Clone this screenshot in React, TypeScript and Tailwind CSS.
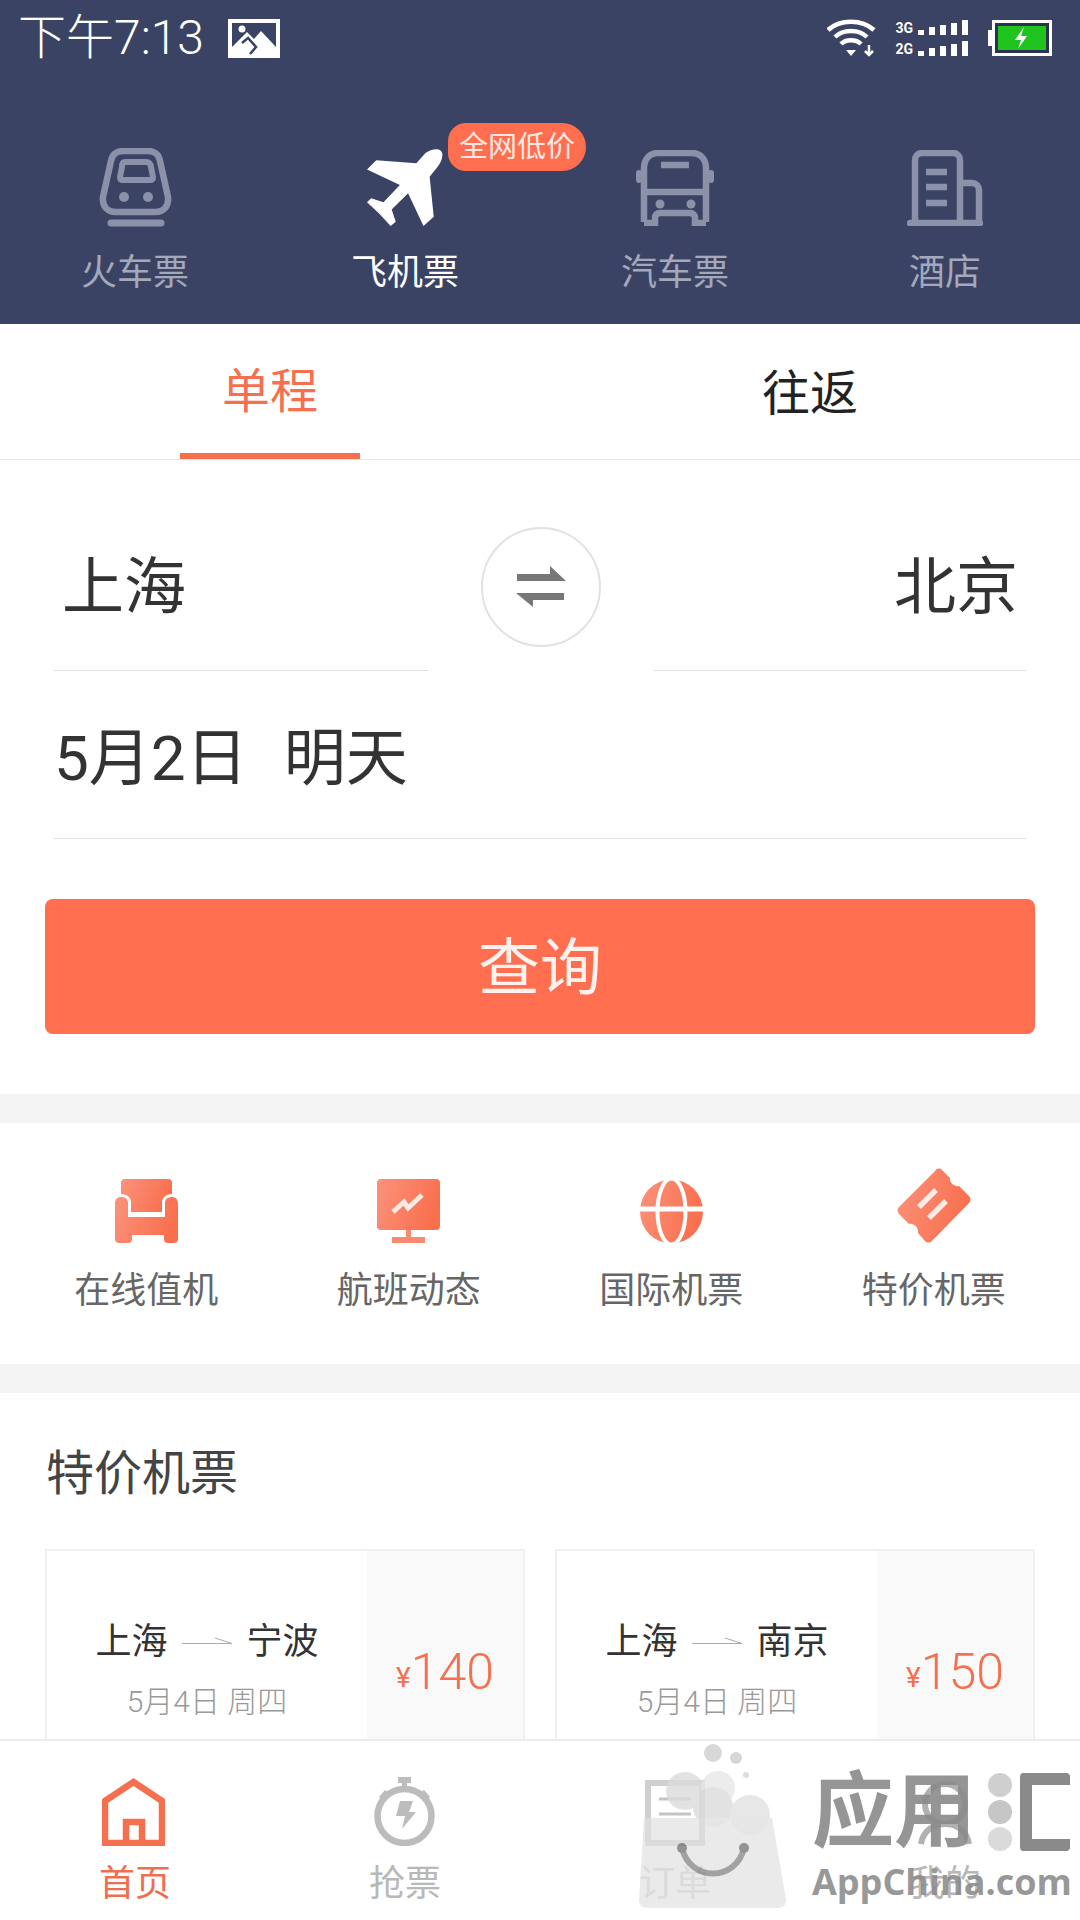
import type { ReactNode } from 'react';

const deals = [
  { to: '宁波', price: '140' },
  { to: '南京', price: '150' },
];

function TrainIcon() {
  return (
    <svg width="73" height="79" viewBox="0 0 73 79" fill="none" stroke="#8b91a8">
      <path strokeWidth="6.5" d="M24 3h25c7 0 11 4 12 10l8 36c1 9-4 15-13 15H17C8 64 3 58 4 49l8-36C13 7 17 3 24 3z" />
      <path strokeWidth="6" d="M26 14h21c3 0 5 2 5 5l2 10c0 2-1 3-3 3H24c-2 0-3-1-3-3l2-10c0-3 1-5 3-5z" />
      <circle cx="25" cy="49" r="5" fill="#8b91a8" stroke="none" />
      <circle cx="49" cy="49" r="5" fill="#8b91a8" stroke="none" />
      <path strokeWidth="7" strokeLinecap="round" d="M12 75h50" />
    </svg>
  );
}

function PlaneIcon() {
  return (
    <svg width="80" height="78" viewBox="0 0 76 76" fill="#fff">
      <path d="M58 4C63 0 71-1 73 2C76 5 74 12 70 17L62 27L66 66L56 75L41 43L25 59L29 71L24 75L13 63L1 52L5 48L17 52L33 35L1 20L10 11L49 14Z" />
    </svg>
  );
}

function BusIcon() {
  return (
    <svg width="78" height="76" viewBox="0 0 78 76" fill="none" stroke="#8b91a8" strokeWidth="6.5">
      <path d="M8 72V18C8 9 14 3 22 3h34c8 0 14 6 14 15v54" />
      <path d="M8 73h11v-5c0-3 2-5 5-5h30c3 0 5 2 5 5v5h11" />
      <path d="M8 42h62M25 15h28" />
      <circle cx="24" cy="54" r="4.5" fill="#8b91a8" stroke="none" />
      <circle cx="55" cy="54" r="4.5" fill="#8b91a8" stroke="none" />
      <rect x="0" y="20" width="6" height="13" rx="3" fill="#8b91a8" stroke="none" />
      <rect x="72" y="20" width="6" height="13" rx="3" fill="#8b91a8" stroke="none" />
    </svg>
  );
}

function HotelIcon() {
  return (
    <svg width="76" height="76" viewBox="0 0 76 76" fill="none" stroke="#8b91a8" strokeWidth="6.5">
      <path d="M8 72V10c0-4 3-7 7-7h31c4 0 7 3 7 7v62" />
      <path d="M53 33h12c4 0 7 3 7 7v32" />
      <path strokeLinecap="round" d="M3 73h70" />
      <path d="M19 22h21M19 37h21M19 53h21" />
    </svg>
  );
}

function Grad({ id }: { id: string }) {
  return (
    <defs>
      <linearGradient id={id} x1="0" y1="0" x2="1" y2="0.3">
        <stop offset="0" stopColor="#fb937c" />
        <stop offset="1" stopColor="#f9704f" />
      </linearGradient>
    </defs>
  );
}

function SofaIcon() {
  return (
    <svg width="63" height="65" viewBox="0 0 63 65">
      <Grad id="sofa" />
      <path fill="url(#sofa)" d="M6 4a4 4 0 0 1 4-4h43a4 4 0 0 1 4 4v11c-5 0-10 3-10 8v10H16V23c0-5-5-8-10-8z" />
      <path fill="url(#sofa)" d="M0 24c0-4 3-6 6-6c4 0 7 2 7 6v14h37V24c0-4 3-6 7-6c3 0 6 2 6 6v36c0 3-2 4-4 4h-6c-2 0-4-1-4-4v-4H17v4c0 3-2 4-4 4H4c-2 0-4-1-4-4z" />
    </svg>
  );
}

function MonitorIcon() {
  return (
    <svg width="63" height="65" viewBox="0 0 63 65">
      <Grad id="monitor" />
      <rect width="63" height="51" rx="4" fill="url(#monitor)" />
      <rect x="29" y="51" width="5" height="8" fill="#f98a72" />
      <rect x="15" y="58" width="33" height="6" fill="#f98a72" />
      <path d="M16 33L27 23L31 29L45 16" fill="none" stroke="#fdeae4" strokeWidth="5" />
    </svg>
  );
}

function GlobeIcon() {
  return (
    <svg width="63" height="65" viewBox="0 0 63 65">
      <Grad id="globe" />
      <ellipse cx="31.5" cy="32.5" rx="31.5" ry="32" fill="url(#globe)" />
      <ellipse cx="31.5" cy="32.5" rx="14" ry="33" fill="none" stroke="#fff" strokeWidth="4" />
      <path d="M0 30h63" stroke="#fff" strokeWidth="5" />
    </svg>
  );
}

function TicketIcon() {
  return (
    <svg width="75" height="76" viewBox="0 0 75 76">
      <Grad id="ticket" />
      <path fill="url(#ticket)" d="M39 3c2-3 5-3 7-1l8 8c-1 4 4 9 9 8l10 10c2 3 2 5 0 7L36 73c-2 2-5 2-7 0l-7-8c1-5-4-10-9-9L3 46c-2-3-2-5 0-7z" />
      <path d="M23 39L40 22M33 50L50 33" stroke="#fdeae4" strokeWidth="5.5" />
    </svg>
  );
}

function HomeIcon() {
  return (
    <svg width="63" height="68" viewBox="0 0 63 68" fill="none" stroke="#f4704f" strokeWidth="6.5" className="-ml-[3px]">
      <path d="M3 65V23L31.5 4L60 23V65Z" />
      <path d="M24 65V44H40V65" />
    </svg>
  );
}

function TimerIcon() {
  return (
    <svg width="61" height="69" viewBox="0 0 61 69" className="-ml-[2px]">
      <circle cx="30.5" cy="39" r="27" fill="none" stroke="#bcbcbc" strokeWidth="6.5" />
      <rect x="24" y="0" width="13" height="6" fill="#bcbcbc" />
      <rect x="28" y="5" width="5" height="6" fill="#bcbcbc" />
      <path d="M5 20l6-7 5 4-6 7zM56 20l-6-7-5 4 6 7z" fill="#bcbcbc" />
      <path d="M26 24h13l-4 11h7L28 52l3-13h-9z" fill="#bcbcbc" />
    </svg>
  );
}

function OrderIcon() {
  return (
    <svg width="60" height="66" viewBox="0 0 60 66" fill="none" stroke="#cfcfcf" strokeWidth="6">
      <rect x="3" y="3" width="54" height="60" />
      <path d="M14 19h32M14 34h32" stroke="#c4c4c4" strokeWidth="3" />
    </svg>
  );
}

function PersonIcon() {
  return (
    <svg width="60" height="66" viewBox="0 0 60 66" fill="none" stroke="#b0b0b0" strokeWidth="6">
      <circle cx="30" cy="24" r="20" />
      <path d="M6 64c2-13 12-20 24-20s22 7 24 20" />
    </svg>
  );
}

function PictureIcon() {
  return (
    <svg width="52" height="39" viewBox="0 0 52 39">
      <rect width="52" height="39" fill="#fff" />
      <path d="M4 4h44v24L33 12L26 20L19 13L4 28z" fill="#3a4363" />
      <circle cx="14" cy="10" r="3.5" fill="#fff" />
      <path d="M14 24l6-5 8 9-6 7" fill="none" stroke="#3a4363" strokeWidth="2.5" />
    </svg>
  );
}

function WifiIcon() {
  return (
    <svg width="49" height="38" viewBox="0 0 49 38" fill="none" stroke="#fff" strokeWidth="4.5">
      <path d="M1 11C13 0 35 0 47 11" />
      <path d="M8 18C16 10 32 10 40 18" />
      <path d="M14 25C19 20 29 20 34 25" />
      <path d="M19 31h10l-5 6z" fill="#fff" stroke="none" />
      <path d="M42 26v8M38 32l4 4 4-4" strokeWidth="2.5" />
    </svg>
  );
}

function SignalBars() {
  const bars = [5, 8, 10, 12, 15];
  return (
    <div className="flex items-end gap-[5px]">
      {bars.map((h) => (
        <div key={h} className="w-[6px] bg-white" style={{ height: h }} />
      ))}
    </div>
  );
}

function BatteryIcon() {
  return (
    <svg width="64" height="36" viewBox="0 0 64 36">
      <rect x="0" y="10" width="5" height="16" fill="#fff" />
      <rect x="5.5" y="1.5" width="57" height="33" fill="#2c3350" stroke="#fff" strokeWidth="3" />
      <rect x="10" y="6" width="48" height="24" fill="#1fc41f" />
      <path d="M36 7L27 20h6l-3 9 9-13h-6z" fill="#fff" />
    </svg>
  );
}

function TopTab({ icon, label, active, children }: { icon: ReactNode; label: string; active?: boolean; children?: ReactNode }) {
  return (
    <div className="relative flex flex-col items-center">
      <div className="flex h-[79px] items-center justify-center">{icon}</div>
      <span className={`mt-[24px] text-[36px] leading-[44px] ${active ? 'text-white' : 'text-[#a3a8ba]'}`}>{label}</span>
      {children}
    </div>
  );
}

function Shortcut({ icon, label }: { icon: ReactNode; label: string }) {
  return (
    <div className="flex flex-col items-center">
      <div className="flex h-[76px] items-end justify-center">{icon}</div>
      <span className="mt-[25px] text-[36px] leading-[44px] text-[#666]">{label}</span>
    </div>
  );
}

function BottomTab({ icon, label, color }: { icon: ReactNode; label: string; color: string }) {
  return (
    <div className="flex flex-col items-center">
      <div className="flex h-[69px] items-end justify-center">{icon}</div>
      <span className={`mt-[16px] text-[36px] leading-[44px] ${color}`}>{label}</span>
    </div>
  );
}

function Watermark() {
  return (
    <div className="pointer-events-none absolute bottom-[12px] left-[638px] flex w-[442px] items-end">
      <svg width="150" height="165" viewBox="0 0 150 165" className="shrink-0 opacity-80">
        <circle cx="47" cy="48" r="19" fill="#dcdcdc" />
        <circle cx="75" cy="10" r="9" fill="#cfcfcf" />
        <circle cx="98" cy="15" r="6" fill="#cdcdcd" />
        <circle cx="108" cy="32" r="3" fill="#d5d5d5" />
        <circle cx="80" cy="45" r="17" fill="#e8e8e8" />
        <circle cx="75" cy="64" r="20" fill="#dcdcdc" />
        <circle cx="112" cy="72" r="20" fill="#e2e2e2" />
        <path d="M6 75h128l14 82c0 5-3 8-8 8H10c-6 0-9-3-9-8z" fill="#e0e0e0" fillOpacity="0.85" />
        <path d="M44 105c8 34 54 34 62 0" fill="none" stroke="#8c8c8c" strokeWidth="6" />
        <circle cx="44" cy="105" r="5" fill="#777" />
        <circle cx="106" cy="105" r="5" fill="#777" />
      </svg>
      <div className="ml-[24px] flex shrink-0 flex-col pb-[4px]">
        <div className="flex h-[88px] items-center text-[#8a8a8a]/90">
          <span className="text-[82px] font-bold leading-[88px]">应用</span>
          <div className="ml-[12px] flex flex-col gap-[3px]">
            <div className="h-[24px] w-[24px] rounded-full bg-[#cfcfcf]" />
            <div className="h-[24px] w-[24px] rounded-full bg-[#c6c6c6]" />
            <div className="h-[24px] w-[24px] rounded-full bg-[#dadada]" />
          </div>
          <div className="ml-[8px] h-[78px] w-[50px] rounded-[4px] border-y-[12px] border-l-[12px] border-[#8a8a8a]" />
        </div>
        <span className="mt-[4px] font-['Open_Sans','Liberation_Sans',sans-serif] text-[36px] font-bold leading-[44px] text-[#8a8a8a]/90">
          AppChina.com
        </span>
      </div>
    </div>
  );
}

export default function App() {
  return (
    <div className="relative flex h-[1920px] w-[1080px] flex-col overflow-hidden bg-white font-['Roboto','Noto_Sans_CJK_SC',sans-serif]">
      {/* Header */}
      <header className="h-[324px] shrink-0 bg-[#3a4363]">
        <div className="flex h-[76px] items-center justify-between pl-[18px] pr-[28px]">
          <div className="flex items-center gap-[24px]">
            <span className="text-[48px] font-light leading-[56px] text-white">下午7:13</span>
            <PictureIcon />
          </div>
          <div className="flex items-center">
            <WifiIcon />
            <div className="ml-[19px] flex flex-col gap-[4px]">
              <div className="flex h-[17px] items-center gap-[5px]">
                <span className="text-[14px] font-bold leading-none text-white">3G</span>
                <SignalBars />
              </div>
              <div className="flex h-[17px] items-center gap-[5px]">
                <span className="text-[14px] font-bold leading-none text-white">2G</span>
                <SignalBars />
              </div>
            </div>
            <div className="ml-[20px]">
              <BatteryIcon />
            </div>
          </div>
        </div>
        <div className="grid grid-cols-4 pt-[72px]">
          <TopTab icon={<TrainIcon />} label="火车票" />
          <TopTab icon={<PlaneIcon />} label="飞机票" active>
            <span className="absolute left-[178px] top-[-25px] flex h-[48px] w-[138px] items-center justify-center rounded-l-[18px] rounded-r-[24px] bg-[#ff6e4f] text-[29px] leading-none text-[#ffe9e2]">
              全网低价
            </span>
          </TopTab>
          <TopTab icon={<BusIcon />} label="汽车票" />
          <TopTab icon={<HotelIcon />} label="酒店" />
        </div>
      </header>

      {/* Scrolling content */}
      <main className="min-h-0 flex-1 overflow-hidden">
        <div className="grid h-[136px] grid-cols-2 border-b border-[#e6e6e6]">
          <div className="flex justify-center">
            <div className="flex h-[135px] w-[180px] items-center justify-center border-b-[6px] border-[#f4704f] pt-[6px] text-[48px] leading-none text-[#f4704f]">
              单程
            </div>
          </div>
          <div className="flex items-center justify-center pt-[4px] text-[48px] leading-none text-[#222]">往返</div>
        </div>

        <div className="flex justify-between px-[54px]">
          <div className="flex h-[211px] w-[374px] items-center border-b border-[#dfdfdf] pl-[8px] pt-[46px] text-[62px] leading-none text-[#333]">
            上海
          </div>
          <div className="mt-[67px] flex h-[120px] w-[120px] items-center justify-center rounded-full border-2 border-[#e2e2e2]">
            <svg width="50" height="42" viewBox="0 0 50 42" fill="#777">
              <path d="M1 8H34V0L50 15H1Z" />
              <path d="M0 27H48V34H17V41Z" />
            </svg>
          </div>
          <div className="flex h-[211px] w-[372px] items-center justify-end border-b border-[#dfdfdf] pr-[8px] pt-[46px] text-[62px] leading-none text-[#333]">
            北京
          </div>
        </div>

        <div className="mx-[54px] flex h-[168px] items-center gap-[36px] border-b border-[#dfdfdf] pt-[8px] text-[62px] leading-none text-[#333]">
          <span>5月2日</span>
          <span>明天</span>
        </div>

        <div className="mx-[45px] mt-[60px] flex h-[135px] items-center justify-center rounded-[8px] bg-[#ff6e4f] pt-[5px] text-[62px] leading-none text-[#fff2ee]">
          查询
        </div>

        <div className="mt-[60px] h-[29px] bg-[#f4f4f4]" />

        <div className="grid h-[241px] grid-cols-4 px-[15px] pt-[45px]">
          <Shortcut icon={<SofaIcon />} label="在线值机" />
          <Shortcut icon={<MonitorIcon />} label="航班动态" />
          <Shortcut icon={<GlobeIcon />} label="国际机票" />
          <Shortcut icon={<TicketIcon />} label="特价机票" />
        </div>

        <div className="h-[29px] bg-[#f4f4f4]" />

        <h2 className="pl-[46px] pt-[57px] text-[48px] font-normal leading-[48px] text-[#444]">特价机票</h2>

        <div className="mt-[51px] grid grid-cols-2 gap-[30px] px-[45px]">
          {deals.map((deal) => (
            <div key={deal.to} className="flex h-[260px] border-2 border-[#f0f0f0]">
              <div className="flex flex-1 flex-col items-center pt-[69px]">
                <div className="flex items-center gap-[14px] text-[36px] leading-[44px] text-[#333]">
                  <span>上海</span>
                  <svg width="51" height="10" viewBox="0 0 51 10" fill="none" stroke="#aaa">
                    <path d="M0 6.5H50L33 1" />
                  </svg>
                  <span>{deal.to}</span>
                </div>
                <span className="mt-[18px] text-[30px] font-light leading-[40px] text-[#999]">5月4日 周四</span>
              </div>
              <div className="flex w-[156px] items-start justify-center bg-[#f9f9f9] pt-[93px] text-[#f4704f]">
                <span className="pt-[14px] text-[28px] leading-[40px]">¥</span>
                <span className="text-[50px] font-light leading-[56px]">{deal.price}</span>
              </div>
            </div>
          ))}
        </div>
      </main>

      {/* Bottom tabs */}
      <nav className="grid h-[181px] shrink-0 grid-cols-4 border-t-2 border-[#ececec] bg-white pt-[36px]">
        <BottomTab icon={<HomeIcon />} label="首页" color="text-[#ee6f50]" />
        <BottomTab icon={<TimerIcon />} label="抢票" color="text-[#b8b8b8]" />
        <BottomTab icon={<OrderIcon />} label="订单" color="text-[#cfcfcf]" />
        <BottomTab icon={<PersonIcon />} label="我的" color="text-[#b8b8b8]" />
      </nav>

      <Watermark />
    </div>
  );
}
